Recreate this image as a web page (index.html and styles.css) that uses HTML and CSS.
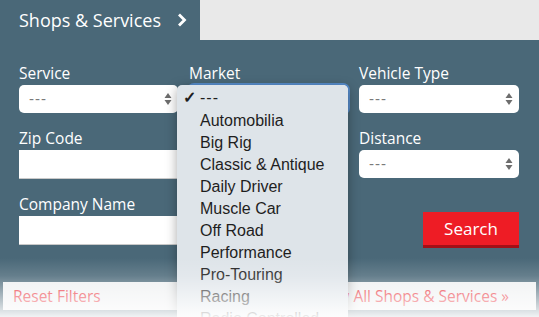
FILE: index.html
```html
<!DOCTYPE html>
<html lang="en">
<head>
  <meta charset="UTF-8">
  <meta name="viewport" content="width=device-width, initial-scale=1.0">
  <title>Shops &amp; Services</title>
  <link rel="stylesheet" href="styles.css">
</head>
<body>
  <!-- Tabs -->
  <div class="tabs">
    <div class="tab active">
      Shops &amp; Services
      <svg class="chevron" width="10" height="14" viewBox="0 0 10 14"><path d="M2 1.5 L7.5 7 L2 12.5" fill="none" stroke="#fff" stroke-width="2.8"/></svg>
    </div>
    <div class="tab-rest"></div>
  </div>

  <!-- Filter panel -->
  <div class="panel">
    <div class="filters">
      <div class="field">
        <label>Service</label>
        <div class="select">
          <span>---</span>
          <svg class="arrows" width="8" height="14" viewBox="0 0 8 14"><path d="M4 1 L7.5 6 H0.5 Z M4 13 L7.5 8 H0.5 Z" fill="#6d6d6d"/></svg>
        </div>
      </div>
      <div class="field">
        <label>Market</label>
        <!-- value is shown by the open list below -->
        <div class="select focused"></div>
      </div>
      <div class="field">
        <label>Vehicle Type</label>
        <div class="select">
          <span>---</span>
          <svg class="arrows" width="8" height="14" viewBox="0 0 8 14"><path d="M4 1 L7.5 6 H0.5 Z M4 13 L7.5 8 H0.5 Z" fill="#6d6d6d"/></svg>
        </div>
      </div>

      <div class="field wide">
        <label>Zip Code</label>
        <input class="text-input" type="text">
      </div>
      <div class="field">
        <label>Distance</label>
        <div class="select">
          <span>---</span>
          <svg class="arrows" width="8" height="14" viewBox="0 0 8 14"><path d="M4 1 L7.5 6 H0.5 Z M4 13 L7.5 8 H0.5 Z" fill="#6d6d6d"/></svg>
        </div>
      </div>

      <div class="field wide">
        <label>Company Name</label>
        <input class="text-input" type="text">
      </div>
      <div class="field action">
        <button class="search">Search</button>
      </div>
    </div>

    <div class="links">
      <a href="#">Reset Filters</a>
      <a href="#">View All Shops &amp; Services &raquo;</a>
    </div>
  </div>

  <!-- Open Market dropdown -->
  <ul class="dropdown">
    <li class="checked"><span class="check">&#10003;</span>---</li>
    <li>Automobilia</li>
    <li>Big Rig</li>
    <li>Classic &amp; Antique</li>
    <li>Daily Driver</li>
    <li>Muscle Car</li>
    <li>Off Road</li>
    <li>Performance</li>
    <li>Pro-Touring</li>
    <li>Racing</li>
    <li>Radio Controlled</li>
  </ul>

  <div class="fade"></div>
</body>
</html>
```

FILE: styles.css
```css
* {
  box-sizing: border-box;
  margin: 0;
  padding: 0;
}

body {
  font-family: "Open Sans", Arial, sans-serif;
  background: #fff;
  color: #fff;
  width: 539px;
  height: 317px;
  overflow: hidden;
  position: relative;
}

.tabs {
  display: flex;
  height: 40px;
}

.tab.active {
  width: 200px;
  background: #4a6878;
  padding-left: 19px;
  font-size: 18px;
  line-height: 38px;
  display: flex;
  align-items: center;
}

.chevron {
  margin-left: 16px;
}

.tab-rest {
  flex: 1;
  background: #e9e9e9;
}

.panel {
  background: #4a6878;
  padding: 22px 19px 10px;
  height: 277px;
}

.filters {
  display: grid;
  grid-template-columns: 159px 159px 160px;
  column-gap: 11px;
  row-gap: 14px;
}

.field label {
  display: block;
  font-size: 15.5px;
  line-height: 23px;
}

.field.wide {
  grid-column: span 2;
}

.field.action {
  display: flex;
  justify-content: flex-end;
  align-items: flex-end;
}

.select {
  position: relative;
  height: 28px;
  background: #fff;
  border-radius: 5px;
  color: #7a7a7a;
  font-family: "Liberation Sans", Arial, sans-serif;
  font-size: 15px;
  letter-spacing: 1px;
  line-height: 28px;
  padding-left: 10px;
}

.select.focused {
  box-shadow: 0 0 0 2px rgba(90, 150, 225, 0.8);
}

.arrows {
  position: absolute;
  right: 6px;
  top: 7px;
}

.text-input {
  display: block;
  width: 100%;
  height: 29px;
  border: none;
  border-bottom: 1px solid #c9c9c9;
  background: #fff;
}

.search {
  width: 96px;
  height: 36px;
  margin-bottom: -3px;
  background: #ee1c25;
  border: none;
  border-bottom: 3px solid #a30f17;
  color: #fff;
  font-family: "Open Sans", Arial, sans-serif;
  font-size: 17px;
  cursor: pointer;
}

.links {
  display: flex;
  justify-content: space-between;
  margin: 37px -16px 0;
  height: 28px;
  padding: 0 27px 0 10px;
  background: #eef0f1;
}

.links a {
  color: #e8202a;
  text-decoration: none;
  font-size: 15.5px;
  line-height: 28px;
}

.dropdown {
  position: absolute;
  left: 177px;
  top: 85px;
  width: 171px;
  height: 260px;
  list-style: none;
  background: #dee4e9;
  border-radius: 5px;
  box-shadow: 0 3px 12px rgba(0, 0, 0, 0.35);
  padding-top: 1px;
  font-family: "Liberation Sans", Arial, sans-serif;
  font-size: 16px;
  color: #1e1e1e;
}

.dropdown li {
  line-height: 22px;
  padding-left: 23px;
}

.dropdown li.checked {
  line-height: 24px;
  display: flex;
  padding-left: 6px;
  letter-spacing: 1px;
}

.check {
  width: 17px;
  font-weight: bold;
  letter-spacing: 0;
}

.fade {
  position: absolute;
  left: 0;
  right: 0;
  top: 258px;
  bottom: 0;
  background: linear-gradient(to bottom, rgba(255, 255, 255, 0) 0%, rgba(255, 255, 255, 0.15) 30%, rgba(255, 255, 255, 0.5) 62%, rgba(255, 255, 255, 0.92) 100%);
  pointer-events: none;
}
```
